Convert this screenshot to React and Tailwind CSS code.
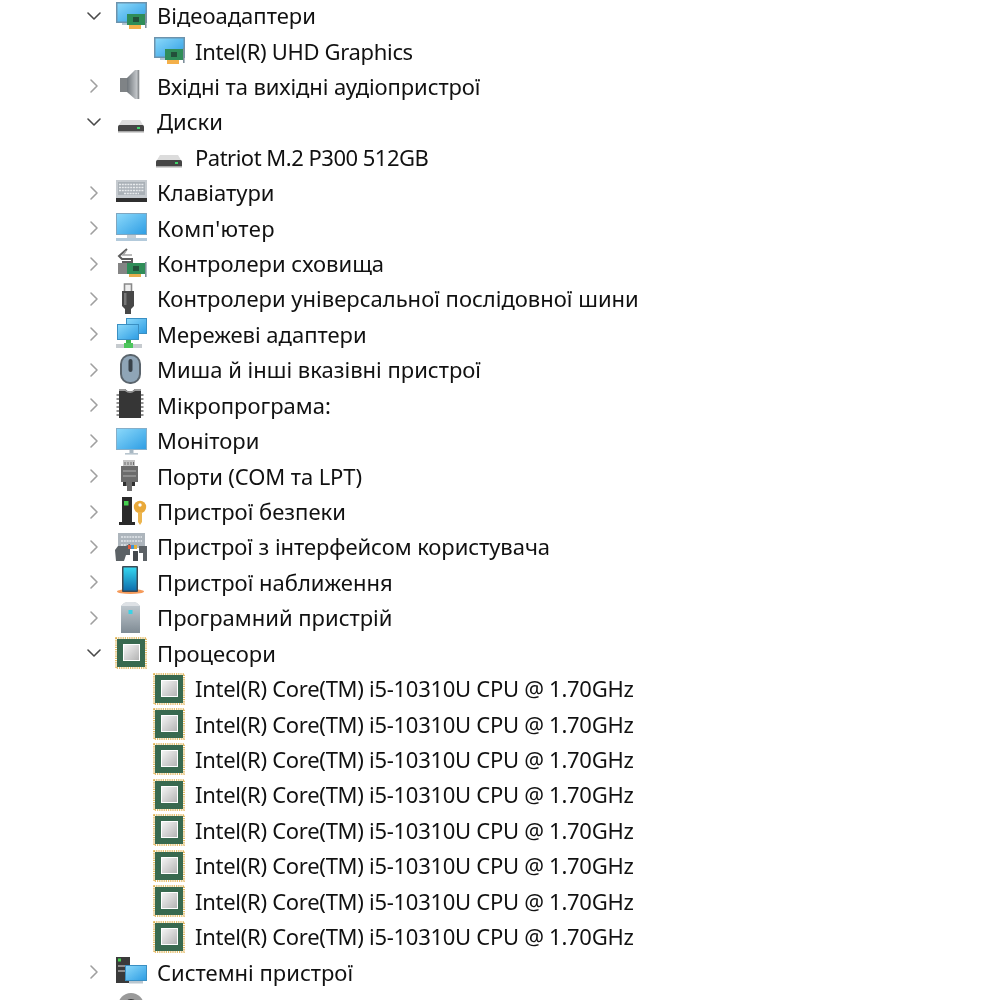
import { ChevronRight, ChevronDown } from "lucide-react";

// ================= ICONS =================
const Grad = ({ id, from, to, x2 = 1, y2 = 1 }) => (
  <linearGradient id={id} x1="0" y1="0" x2={x2} y2={y2}>
    <stop offset="0" stopColor={from} />
    <stop offset="1" stopColor={to} />
  </linearGradient>
);

const Svg = ({ children }) => (
  <svg width="32" height="32" viewBox="0 0 32 32">
    <defs>
      <Grad id="blue" from="#8ad8fa" to="#2f9ee4" />
      <Grad id="steel" from="#6f757a" to="#d4d7da" x2={1} y2={0} />
      <Grad id="chip" from="#f4f4f4" to="#b4b4b4" />
      <Grad id="phone" from="#35d6ef" to="#0f6fae" x2={0} y2={1} />
      <Grad id="tower" from="#c8d0d6" to="#7f8b94" x2={0} y2={1} />
    </defs>
    {children}
  </svg>
);

const Board = ({ x = 12, y = 14 }) => (
  <>
    <rect x={x} y={y} width="18" height="11" fill="#2f8d58" />
    <rect x={x + 6} y={y + 3} width="6" height="5" fill="#23503a" />
    <rect x={x + 2} y={y + 11} width="12" height="4" fill="#f4b04a" />
    <rect x={x + 18} y={y - 1} width="1.6" height="15" fill="#7f909c" />
  </>
);

const VideoIcon = () => (
  <Svg>
    <rect x="1" y="2" width="31" height="21" fill="#6c93ad" />
    <rect x="2.5" y="3.5" width="28" height="18" fill="url(#blue)" />
    <rect x="7" y="23" width="9" height="2" fill="#b2c6d3" />
    <Board />
  </Svg>
);

const SpeakerIcon = () => (
  <Svg>
    <rect x="5" y="8" width="8" height="14" fill="#7f8386" />
    <path d="M12 8L20 0h4v29h-4l-8-7z" fill="url(#steel)" />
    <rect x="22.5" y="0" width="1.8" height="29" fill="#8b8f92" />
  </Svg>
);

const DiskIcon = () => (
  <Svg>
    <path d="M7 14h18l3 5H4z" fill="#dcdcdc" />
    <rect x="3" y="19" width="26" height="7" rx="1.5" fill="#454545" />
    <rect x="3" y="25" width="26" height="1.5" fill="#a8a8a8" />
    <rect x="22" y="21" width="3" height="2" fill="#3fd46a" />
  </Svg>
);

const KeyboardIcon = () => (
  <Svg>
    <rect x="1" y="3" width="31" height="21" fill="#c5cacf" />
    <rect x="3" y="5" width="27" height="13" fill="#aab1b7" />
    <path d="M4 7.5h25M4 10.5h25M4 13.5h25M9 16.5h15" stroke="#e8ebed" strokeWidth="1.6" strokeDasharray="2 .8" />
    <rect x="1" y="21" width="31" height="4" fill="#2f2f2f" />
  </Svg>
);

const ComputerIcon = () => (
  <Svg>
    <rect x="1" y="1" width="31" height="22" fill="#7ea6c0" />
    <rect x="2" y="2" width="29" height="20" fill="url(#blue)" />
    <rect x="12" y="23" width="9" height="3" fill="#c3ced6" />
    <rect x="1" y="26" width="31" height="3" fill="#b3cadb" />
  </Svg>
);

const StorageIcon = () => (
  <Svg>
    <path d="M12 1L4 8l3 3h10v3H7" fill="none" stroke="#5c5c5c" strokeWidth="2" />
    <path d="M11 3l-3 4h9" fill="none" stroke="#a5a5a5" strokeWidth="1.5" />
    <path d="M3 15h12v11H3z" fill="#848484" />
    <rect x="12" y="15" width="18" height="11" fill="#2f8d58" />
    <rect x="18" y="18" width="6" height="5" fill="#23503a" />
    <rect x="14" y="26" width="12" height="3" fill="#e7ad4d" />
    <rect x="30" y="14" width="1.6" height="15" fill="#7f909c" />
  </Svg>
);

const UsbIcon = () => (
  <Svg>
    <path d="M9.5 1h7v8h-7z" fill="#eee" stroke="#8a8a8a" strokeWidth="1.6" />
    <path d="M7 8h12v15l-3 3v5h-6v-5l-3-3z" fill="#474747" />
    <rect x="9" y="10" width="2.5" height="12" fill="#777" />
  </Svg>
);

const NetworkIcon = () => (
  <Svg>
    <rect x="11" y="0" width="21" height="16" fill="#3a8fc2" />
    <rect x="12" y="1" width="19" height="14" fill="url(#blue)" />
    <rect x="2" y="6" width="22" height="16" fill="#3a8fc2" />
    <rect x="3" y="7" width="20" height="14" fill="url(#blue)" />
    <rect x="11" y="22" width="5" height="4" fill="#3fb54e" />
    <rect x="1" y="26" width="26" height="4" fill="#c6cbcf" />
    <rect x="9" y="25" width="9" height="5" fill="#4dc65c" />
  </Svg>
);

const MouseIcon = () => (
  <Svg>
    <rect x="5" y="0" width="21" height="30" rx="10" fill="#5a646c" />
    <rect x="7" y="2" width="17" height="26" rx="8" fill="#8fa5b7" />
    <rect x="13.5" y="5" width="4" height="13" rx="2" fill="#39424a" />
  </Svg>
);

const FirmwareIcon = () => (
  <Svg>
    <path d="M4 0h6q5 5 10 0h6v29H4z" fill="#363636" />
    <path d="M4 0h6q5 5 10 0h6v2h-6q-5 4-10 0H4z" fill="#9a9a9a" />
    <path d="M1.5 6h2.5M1.5 10h2.5M1.5 14h2.5M1.5 18h2.5M1.5 22h2.5M1.5 26h2.5M26 6h2.5M26 10h2.5M26 14h2.5M26 18h2.5M26 22h2.5M26 26h2.5" stroke="#8f8f8f" strokeWidth="1.8" />
  </Svg>
);

const MonitorIcon = () => (
  <Svg>
    <rect x="1" y="3" width="31" height="22" fill="#84aec9" />
    <rect x="2" y="4" width="29" height="20" fill="url(#blue)" />
    <rect x="14.5" y="25" width="4" height="3" fill="#a8b8c3" />
    <rect x="10" y="28" width="13" height="1.6" fill="#b8c5ce" />
  </Svg>
);

const PortIcon = () => (
  <Svg>
    <rect x="8" y="0" width="12" height="6" fill="#c4c4c4" />
    <path d="M10 2v3M13 2v3M16 2v3M18.500 2v3" stroke="#6e6e6e" strokeWidth="1" />
    <path d="M6 6h17v16h-4v4h-2v5h-5v-5h-2v-4H6z" fill="#6c6c6c" />
    <path d="M8 11h13M8 16h13" stroke="#999" strokeWidth="1.6" />
    <path d="M8 22h3v4H8zM17 22h3v4h-3z" fill="#303030" />
  </Svg>
);

const SecurityIcon = () => (
  <Svg>
    <path d="M7 1h10v25h3v3H4v-3h3z" fill="#2a2a2a" />
    <rect x="9" y="5" width="4.5" height="4.5" fill="#45d14f" />
    <circle cx="25" cy="11" r="6.2" fill="#e9a93a" />
    <circle cx="25" cy="9" r="1.7" fill="#fff" />
    <path d="M23 16h4v10l-2 3-2-3z" fill="#ecb54e" />
  </Svg>
);

const HidIcon = () => (
  <Svg>
    <rect x="3" y="2" width="27" height="15" fill="#adb5bc" />
    <path d="M6 6h21M6 10h21M6 14h8" stroke="#e4e8eb" strokeWidth="1.7" strokeDasharray="2 .8" />
    <path d="M0 19l3-4h8l3-2h1v11h-4l-2 6H1z" fill="#5c6266" />
    <rect x="13" y="14" width="3" height="4" fill="#e35d3f" />
    <rect x="16" y="14" width="3" height="4" fill="#3f94d8" />
    <rect x="19" y="14" width="3" height="4" fill="#e0b23c" />
    <path d="M24 15h8v15h-4v-8h-4z" fill="#5c6266" />
    <rect x="18" y="20" width="5" height="10" fill="#44494d" />
  </Svg>
);

const ProximityIcon = () => (
  <Svg>
    <ellipse cx="15.500" cy="25.500" rx="13.500" ry="2.500" fill="#f59a5a" />
    <rect x="7" y="0" width="16" height="26" rx="1" fill="#3c4a55" />
    <rect x="8.500" y="1.500" width="13" height="23" fill="url(#phone)" />
  </Svg>
);

const SoftwareIcon = () => (
  <Svg>
    <path d="M9 1q7-3 13 0l3 3v27H6V4z" fill="url(#tower)" />
    <path d="M9 1q7-3 13 0l3 3H6z" fill="#dde1e5" />
    <rect x="13.500" y="8" width="4" height="4" fill="#39d2e6" />
  </Svg>
);

const CpuIcon = () => (
  <Svg>
    <rect x="1" y="1" width="30" height="30" fill="none" stroke="#dba93f" strokeWidth="1.6" strokeDasharray="1.2 1" />
    <rect x="2" y="2" width="28" height="28" fill="#38694f" />
    <rect x="8" y="7" width="17" height="17" fill="#fff" />
    <rect x="9" y="8" width="15" height="15" fill="url(#chip)" />
  </Svg>
);

const SystemIcon = () => (
  <Svg>
    <rect x="1" y="1" width="14" height="26" fill="#3a3a3a" />
    <rect x="3" y="2.500" width="3" height="3" fill="#45d14f" />
    <rect x="3" y="9" width="9" height="2" fill="#8c8c8c" />
    <rect x="3" y="14" width="9" height="2" fill="#8c8c8c" />
    <rect x="10" y="9" width="22" height="16" fill="#3a8fc2" />
    <rect x="11" y="10" width="20" height="14" fill="url(#blue)" />
    <rect x="14" y="25" width="14" height="2.500" fill="#b9c6cf" />
  </Svg>
);

const WebcamIcon = () => (
  <Svg>
    <circle cx="16" cy="15" r="13" fill="#9a9a9a" />
    <circle cx="16" cy="15" r="7" fill="#3a3a3a" />
  </Svg>
);

// ================= TREE DATA =================
const cpu = "Intel(R) Core(TM) i5-10310U CPU @ 1.70GHz";

const rows = [
  { label: "Відеоадаптери", Icon: VideoIcon, open: true },
  { label: "Intel(R) UHD Graphics", Icon: VideoIcon, child: true, tight: "tracking-[-0.33px]" },
  { label: "Вхідні та вихідні аудіопристрої", Icon: SpeakerIcon, tight: "tracking-[-0.1px]" },
  { label: "Диски", Icon: DiskIcon, open: true },
  { label: "Patriot M.2 P300 512GB", Icon: DiskIcon, child: true, tight: "tracking-[-0.5px]" },
  { label: "Клавіатури", Icon: KeyboardIcon },
  { label: "Комп'ютер", Icon: ComputerIcon, tight: "tracking-[0.4px]" },
  { label: "Контролери сховища", Icon: StorageIcon },
  { label: "Контролери універсальної послідовної шини", Icon: UsbIcon },
  { label: "Мережеві адаптери", Icon: NetworkIcon },
  { label: "Миша й інші вказівні пристрої", Icon: MouseIcon },
  { label: "Мікропрограма:", Icon: FirmwareIcon },
  { label: "Монітори", Icon: MonitorIcon },
  { label: "Порти (COM та LPT)", Icon: PortIcon, tight: "tracking-[-0.1px]" },
  { label: "Пристрої безпеки", Icon: SecurityIcon },
  { label: "Пристрої з інтерфейсом користувача", Icon: HidIcon, tight: "tracking-[-0.06px]" },
  { label: "Пристрої наближення", Icon: ProximityIcon },
  { label: "Програмний пристрій", Icon: SoftwareIcon },
  { label: "Процесори", Icon: CpuIcon, open: true },
  ...Array.from({ length: 8 }, () => ({ label: cpu, Icon: CpuIcon, child: true, tight: "tracking-[-0.28px]" })),
  { label: "Системні пристрої", Icon: SystemIcon },
  { label: "", Icon: WebcamIcon },
];

function Row({ label, Icon, open, child, tight = "" }) {
  return (
    <li className={`flex items-center h-[35.43px] ${child ? "pl-[153px]" : "pl-[86px]"}`}>
      {!child && (
        <span className="w-[16px] mr-[13px] flex justify-center">
          {open ? (
            <ChevronDown size={24} strokeWidth={1.6} className="text-[#4a4a4a] shrink-0" />
          ) : (
            <ChevronRight size={24} strokeWidth={1.6} className="text-[#a0a0a0] shrink-0" />
          )}
        </span>
      )}
      <span className="w-[32px] h-[32px] shrink-0">
        <Icon />
      </span>
      <span className={`ml-[10px] whitespace-nowrap ${tight}`}>{label}</span>
    </li>
  );
}

export default function App() {
  return (
    <div className="h-[1000px] overflow-hidden bg-white text-[#111111] font-['Noto_Sans','Open_Sans',sans-serif] text-[22px]">
      <ul className="-mt-[2.1px] blur-[0.4px]">
        {rows.map((r, i) => (
          <Row key={i} {...r} />
        ))}
      </ul>
    </div>
  );
}
